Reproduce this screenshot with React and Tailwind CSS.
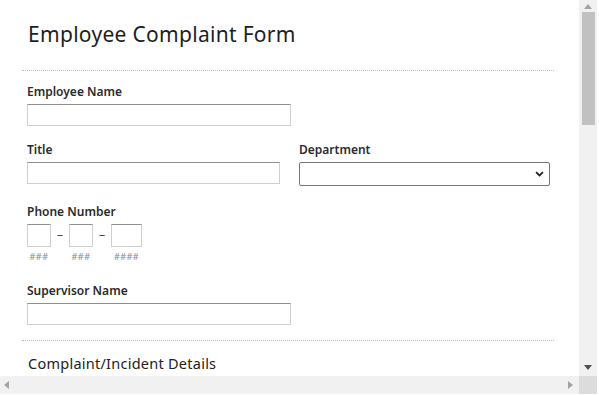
import { useState } from 'react'

const FONT = "font-['Noto_Sans',sans-serif]"
const INPUT = 'block h-[22px] border border-[#cfcfcf] border-t-[#8f8f8f] bg-white text-[12px] outline-none'

function Label({ children }) {
  return <p className="text-[12px] font-semibold leading-[16px] text-[#2b2b2b]">{children}</p>
}

function Field({ label, width, className = '' }) {
  return (
    <div className={className}>
      <Label>{label}</Label>
      <input type="text" className={`${INPUT} mt-[4px]`} style={{ width }} />
    </div>
  )
}

function Divider() {
  return <div className="border-t border-dotted border-[#bdbdbd]" />
}

function Arrow({ dir, color }) {
  const pts = {
    up: '0,5 4,0 8,5',
    down: '0,0 8,0 4,5',
    left: '5,0 5,8 0,4',
    right: '0,0 0,8 5,4',
  }[dir]
  const vertical = dir === 'up' || dir === 'down'
  return (
    <svg viewBox={vertical ? '0 0 8 5' : '0 0 5 8'} className={vertical ? 'h-[5px] w-[8px]' : 'h-[8px] w-[5px]'}>
      <polygon points={pts} fill={color} />
    </svg>
  )
}

function PhoneBox({ width, hint }) {
  return (
    <div className="flex flex-col items-center">
      <input type="text" className={`${INPUT} h-[23px]`} style={{ width }} />
      <span className="mt-[5px] text-[9px] leading-[10px] tracking-[0.5px] text-[#888]">{hint}</span>
    </div>
  )
}

export default function App() {
  const [dept, setDept] = useState('')

  return (
    <div className={`flex h-[395px] w-[599px] flex-col bg-white ${FONT}`}>
      <div className="flex h-[376px]">
        <div className="w-[579px] overflow-hidden">
          <div className="ml-[22px] w-[532px]">
            <div className="pt-[19px] pb-[21px] pl-[6px]">
              <h1 className="text-[21px] leading-[30px] tracking-[0.3px] text-[#1e1e1e]">Employee Complaint Form</h1>
            </div>
            <Divider />

            <div className="pl-[5px]">
              <Field label="Employee Name" width={264} className="pt-[13px]" />

              <div className="mt-[16px] grid grid-cols-[272px_1fr]">
                <Field label="Title" width={253} />
                <div>
                  <Label>Department</Label>
                  <div className="relative mt-[4px] w-[251px]">
                    <select
                      value={dept}
                      onChange={e => setDept(e.target.value)}
                      className="block h-[24px] w-full appearance-none rounded-[2px] border border-[#767676] bg-white text-[12px] outline-none"
                    >
                      <option value=""></option>
                      <option>Human Resources</option>
                      <option>Operations</option>
                      <option>Finance</option>
                    </select>
                    <svg viewBox="0 0 10 7" className="pointer-events-none absolute right-[6px] top-[9px] h-[6px] w-[9px]">
                      <path d="M1 1.2l4 4 4-4" fill="none" stroke="#222" strokeWidth="2" />
                    </svg>
                  </div>
                </div>
              </div>

              <div className="mt-[18px]">
                <Label>Phone Number</Label>
                <div className="mt-[4px] flex items-start gap-[6px]">
                  <PhoneBox width={24} hint="###" />
                  <span className="mt-[4px] text-[12px] leading-[14px] text-[#444]">–</span>
                  <PhoneBox width={24} hint="###" />
                  <span className="mt-[4px] text-[12px] leading-[14px] text-[#444]">–</span>
                  <PhoneBox width={31} hint="####" />
                </div>
              </div>

              <Field label="Supervisor Name" width={264} className="mt-[21px] pb-[15px]" />
            </div>

            <Divider />
            <div className="pt-[12px] pl-[6px]">
              <h2 className="text-[14.5px] leading-[20px] tracking-[0.25px] text-[#222]">Complaint/Incident Details</h2>
            </div>
          </div>
        </div>

        {/* vertical scrollbar */}
        <div className="flex w-[18px] flex-col items-center bg-[#f1f1f1]">
          <div className="flex h-[12px] items-center justify-center"><Arrow dir="up" color="#a3a3a3" /></div>
          <div className="h-[113px] w-[13px] bg-[#c1c1c1]" />
          <div className="flex-1" />
          <div className="flex h-[15px] items-center justify-center pb-[3px]"><Arrow dir="down" color="#505050" /></div>
        </div>
      </div>

      {/* horizontal scrollbar */}
      <div className="flex h-[18px]">
        <div className="flex w-[579px] items-center justify-between bg-[#f1f1f1] pl-[4px] pr-[6px]">
          <Arrow dir="left" color="#a3a3a3" />
          <Arrow dir="right" color="#a3a3a3" />
        </div>
        <div className="w-[18px] bg-[#dcdcdc]" />
      </div>
    </div>
  )
}
